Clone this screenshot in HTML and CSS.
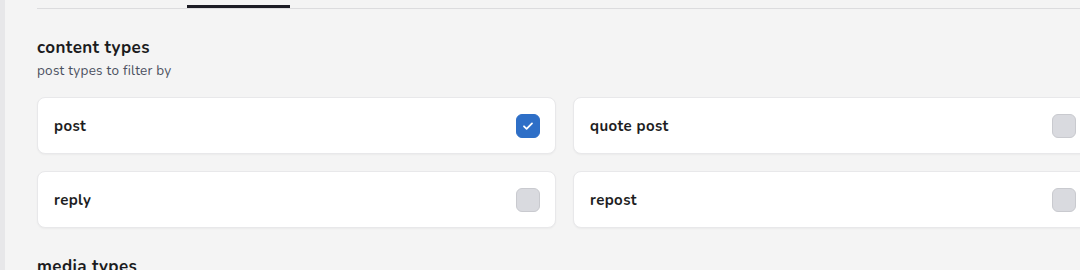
FILE: index.html
```html
<!DOCTYPE html>
<html>
<head>
<meta charset="utf-8">
<link rel="stylesheet" href="styles.css">
</head>
<body>
<div class="shell">
  <div class="rail"></div>
  <div class="main">
    <div class="tabs"><div class="tab-indicator"></div></div>
    <section class="section">
      <h2 class="section-title">content types</h2>
      <p class="section-sub">post types to filter by</p>
      <div class="grid">
        <label class="card"><span class="card-label">post</span><span class="box checked"><svg viewBox="0 0 24 24" width="24" height="24"><path d="M8 12.3l2.6 2.5L16 9.4" fill="none" stroke="#fff" stroke-width="1.8" stroke-linecap="round" stroke-linejoin="round"/></svg></span></label>
        <label class="card"><span class="card-label">quote post</span><span class="box"></span></label>
        <label class="card"><span class="card-label">reply</span><span class="box"></span></label>
        <label class="card"><span class="card-label">repost</span><span class="box"></span></label>
      </div>
    </section>
    <section class="section">
      <h2 class="section-title">media types</h2>
    </section>
  </div>
</div>
</body>
</html>
```
FILE: styles.css
```css
html, body {
  margin: 0;
  padding: 0;
}
body {
  background: #f4f4f4;
  font-family: "Nunito", "Open Sans", "Noto Sans", sans-serif;
  color: #1d1d22;
  overflow: hidden;
}
.shell {
  display: flex;
  min-height: 270px;
}
.rail {
  width: 5px;
  flex: none;
  background: #e7e7e9;
}
.main {
  flex: 1;
  padding-left: 32px;
}
.tabs {
  height: 8px;
  border-bottom: 1px solid #dcdcde;
  display: flex;
  align-items: flex-end;
}
.tab-indicator {
  margin-left: 150px;
  width: 103px;
  height: 3px;
  background: #1c1c24;
}
.section {
  margin-top: 27px;
}
.section-title {
  margin: 0;
  font-size: 17px;
  line-height: 24px;
  font-weight: 700;
  color: #1b1b20;
  letter-spacing: 0.4px;
}
.section-sub {
  margin: 2px 0 0;
  font-size: 13.5px;
  line-height: 18px;
  color: #4b5060;
  letter-spacing: 0.25px;
}
.grid {
  margin-top: 17px;
  display: grid;
  grid-template-columns: 519px 519px;
  gap: 17px;
}
.card {
  height: 57px;
  box-sizing: border-box;
  background: #ffffff;
  border: 1px solid #e8e8ea;
  border-radius: 8px;
  box-shadow: 0 1px 2px rgba(0,0,0,0.04);
  display: flex;
  align-items: center;
  justify-content: space-between;
  padding: 0 15px 0 16px;
}
.card-label {
  font-size: 15px;
  font-weight: 700;
  color: #1d1d22;
  letter-spacing: 0.4px;
}
.box {
  width: 24px;
  height: 24px;
  box-sizing: border-box;
  border-radius: 6px;
  background: #d9dadf;
  border: 1px solid #c9cacf;
  display: flex;
}
.box.checked {
  background: #2e6fc7;
  border-color: #2e6fc7;
}
.box svg {
  margin: -1px;
}
```
